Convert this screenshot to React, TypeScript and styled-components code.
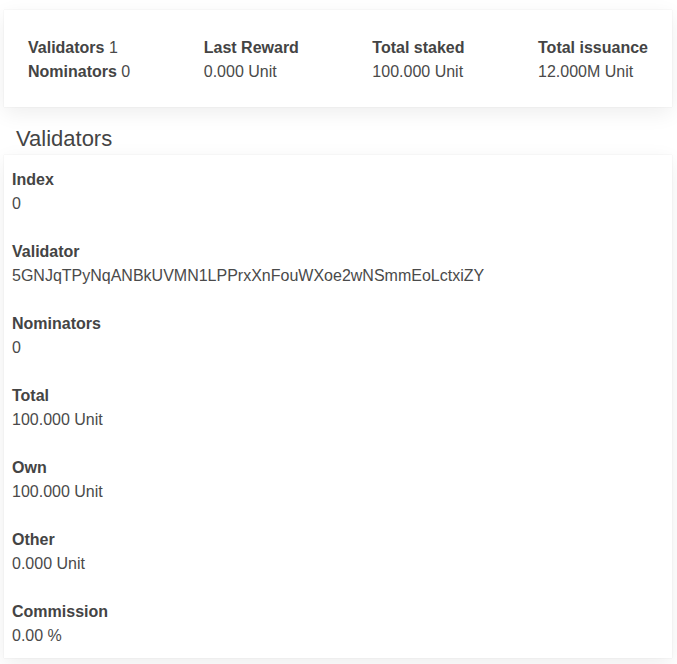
import React from "react";
import styled, { createGlobalStyle } from "styled-components";

const Global = createGlobalStyle`
  html, body { margin: 0; padding: 0; background: #ffffff; }
  body { font-family: "Helvetica Neue", "Liberation Sans", Arial, sans-serif; color: #444; }
`;

const Page = styled.div`
  padding: 10px 5px 6px 4px;
`;

const Card = styled.div<{ $pad: string }>`
  background: #fff;
  padding: ${(p) => p.$pad};
  box-shadow: 0 0 1px rgba(0, 0, 0, 0.12), 0 6px 20px rgba(0, 0, 0, 0.07);
`;

const SummaryRow = styled.div`
  display: flex;
  justify-content: space-between;
`;

const Stat = styled.div`
  font-size: 16px;
  line-height: 24px;
  color: #4a4a4a;
`;

const Label = styled.span`
  font-weight: 700;
  color: #444;
`;

const Value = styled.div`
  font-size: 16px;
  line-height: 24px;
  color: #4a4a4a;
`;

const Heading = styled.h2`
  margin: 18px 0 2px 12px;
  font-size: 22px;
  line-height: 28px;
  font-weight: 400;
  color: #444;
`;

const List = styled.div`
  display: flex;
  flex-direction: column;
  gap: 24px;
`;

const Field = styled.div`
  font-size: 16px;
  line-height: 24px;
`;

const fields: [string, string][] = [
  ["Index", "0"],
  ["Validator", "5GNJqTPyNqANBkUVMN1LPPrxXnFouWXoe2wNSmmEoLctxiZY"],
  ["Nominators", "0"],
  ["Total", "100.000 Unit"],
  ["Own", "100.000 Unit"],
  ["Other", "0.000 Unit"],
  ["Commission", "0.00 %"],
];

export default function App() {
  return (
    <Page>
      <Global />
      <Card $pad="26px 24px 23px 24px">
        <SummaryRow>
          <Stat>
            <div>
              <Label>Validators</Label> 1
            </div>
            <div>
              <Label>Nominators</Label> 0
            </div>
          </Stat>
          <Stat>
            <Label>Last Reward</Label>
            <Value>0.000 Unit</Value>
          </Stat>
          <Stat>
            <Label>Total staked</Label>
            <Value>100.000 Unit</Value>
          </Stat>
          <Stat>
            <Label>Total issuance</Label>
            <Value>12.000M Unit</Value>
          </Stat>
        </SummaryRow>
      </Card>
      <Heading>Validators</Heading>
      <Card $pad="13px 8px 10px 8px">
        <List>
          {fields.map(([k, v]) => (
            <Field key={k}>
              <Label>{k}</Label>
              <Value>{v}</Value>
            </Field>
          ))}
        </List>
      </Card>
    </Page>
  );
}
